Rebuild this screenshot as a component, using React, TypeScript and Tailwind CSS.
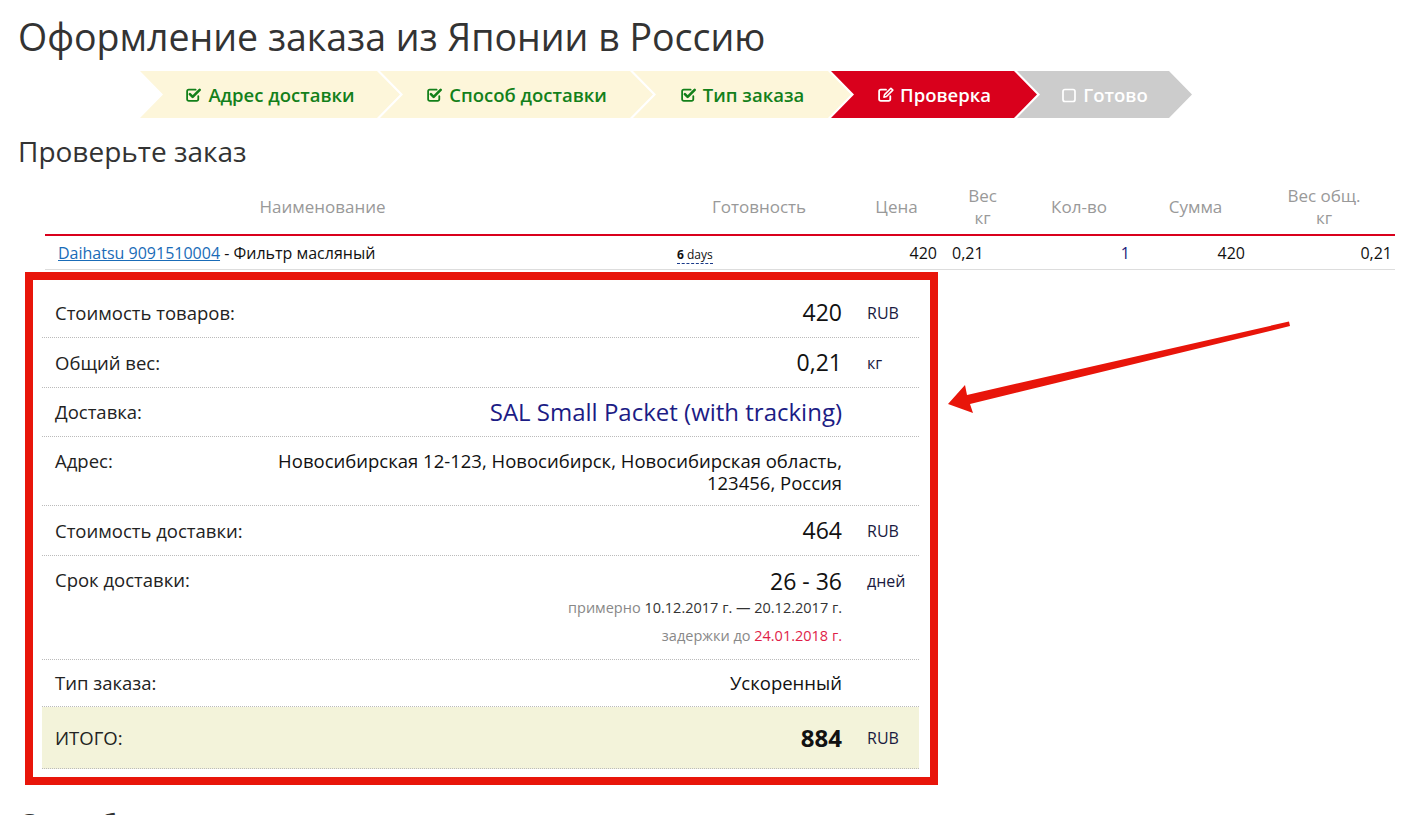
import React from "react";

const CheckSquare = ({ className = "" }: { className?: string }) => (
  <svg viewBox="0 0 16 16" className={className} fill="none" stroke="currentColor" strokeLinecap="round" strokeLinejoin="round">
    <path d="M12.5 9.5v3a1.5 1.5 0 0 1-1.5 1.5H3.5A1.5 1.5 0 0 1 2 12.5V5a1.5 1.5 0 0 1 1.5-1.5h6.5" strokeWidth={1.7} />
    <path d="M4.6 7.6l2.6 2.6 6.6-6.6" strokeWidth={2.5} />
  </svg>
);

const EditSquare = ({ className = "" }: { className?: string }) => (
  <svg viewBox="0 0 16 16" className={className} fill="none" stroke="currentColor" strokeLinecap="round" strokeLinejoin="round">
    <path d="M12.5 9.5v3a1.5 1.5 0 0 1-1.5 1.5H3.5A1.5 1.5 0 0 1 2 12.5V5a1.5 1.5 0 0 1 1.5-1.5h5" strokeWidth={1.7} />
    <path d="M6.5 10.5l0.6-2.4 6-6 1.8 1.8-6 6z" strokeWidth={1.5} />
  </svg>
);

const EmptySquare = ({ className = "" }: { className?: string }) => (
  <svg viewBox="0 0 16 16" className={className} fill="none" stroke="currentColor">
    <rect x="2" y="2.5" width="12" height="12" rx="2" strokeWidth={1.7} />
  </svg>
);

const chevron =
  "[clip-path:polygon(0_0,calc(100%_-_23px)_0,100%_50%,calc(100%_-_23px)_100%,0_100%,23px_50%)]";

const steps = [
  { label: "Адрес доставки", w: "w-[260px]", state: "done" },
  { label: "Способ доставки", w: "w-[273px]", state: "done" },
  { label: "Тип заказа", w: "w-[218px]", state: "done" },
  { label: "Проверка", w: "w-[206px]", state: "active" },
  { label: "Готово", w: "w-[175px]", state: "todo" },
];

const summary = [
  { label: "Стоимость товаров:", value: "420", unit: "RUB", h: "h-[50px]" },
  { label: "Общий вес:", value: "0,21", unit: "кг", h: "h-[50px]" },
];

export default function App() {
  return (
    <div className="relative w-full h-[815px] overflow-hidden bg-white font-['Open_Sans',sans-serif] text-[#222]">
      <div className="pl-[18px]">
        <h1 className="pt-[14px] text-[37.5px] leading-[46px] text-[#333] font-normal">
          Оформление заказа из Японии в Россию
        </h1>

        <div className="mt-[11px] ml-[122px] flex h-[47px]">
          {steps.map((s, i) => (
            <div
              key={s.label}
              className={`${s.w} ${chevron} ${i > 0 ? "-ml-[20px]" : ""} flex items-center justify-center gap-[6px] text-[18.5px] font-semibold ${
                s.state === "done"
                  ? "bg-[#fdf6da] text-[#13801a]"
                  : s.state === "active"
                  ? "bg-[#d9001c] text-white"
                  : "bg-[#cccccc] text-white"
              }`}
            >
              {s.state === "done" && <CheckSquare className="w-[17px] h-[17px]" />}
              {s.state === "active" && <EditSquare className="w-[17px] h-[17px]" />}
              {s.state === "todo" && <EmptySquare className="w-[16px] h-[16px]" />}
              <span>{s.label}</span>
            </div>
          ))}
        </div>

        <h2 className="mt-[15px] text-[28px] leading-[36px] text-[#333] font-normal">Проверьте заказ</h2>
      </div>

      {/* order items */}
      <div className="mt-[14px] ml-[45px] w-[1350px]">
        <div className="grid grid-cols-[625px_178px_97px_75px_118px_115px_142px] h-[53px] pb-[4px] border-b-2 border-[#d9001c] text-[17px] leading-[22px] text-[#999] text-center items-center">
          <div className="pr-[70px]">Наименование</div>
          <div>Готовность</div>
          <div>Цена</div>
          <div>Вес<br />кг</div>
          <div>Кол-во</div>
          <div>Сумма</div>
          <div>Вес общ.<br />кг</div>
        </div>
        <div className="grid grid-cols-[625px_178px_97px_75px_118px_115px_142px] h-[34px] border-b border-[#ddd] text-[16px] items-center text-[#111]">
          <div className="pl-[13px]">
            <a href="#" className="text-[#1a6cb8] underline">Daihatsu 9091510004</a> - Фильтр масляный
          </div>
          <div className="pl-[7px]">
            <span className="text-[12px] border-b border-dashed border-[#1a3a8a] leading-[14px]">
              <b>6</b> days
            </span>
          </div>
          <div className="text-right pr-[8px]">420</div>
          <div className="pl-[7px]">0,21</div>
          <div className="text-right pr-[8px] text-[#1c1c7a]">1</div>
          <div className="text-right pr-[8px]">420</div>
          <div className="text-right pr-[3px]">0,21</div>
        </div>
      </div>

      {/* summary */}
      <div className="mt-[2px] ml-[25px] w-[913px] border-8 border-[#e8150a] pt-[8px] pb-[8px] pl-[9px] pr-[11px]">
        {summary.map((r) => (
          <div key={r.label} className={`grid grid-cols-[214px_597px_66px] ${r.h} items-center border-b border-dotted border-[#bbb]`}>
            <div className="pl-[13px] text-[18.5px]">{r.label}</div>
            <div className="pr-[11px] text-right text-[23px] text-[#111]">{r.value}</div>
            <div className="pl-[14px] text-[16px] text-[#1a1a40]">{r.unit}</div>
          </div>
        ))}
        <div className="grid grid-cols-[214px_597px_66px] h-[49px] items-center border-b border-dotted border-[#bbb]">
          <div className="pl-[13px] text-[18.5px]">Доставка:</div>
          <div className="pr-[11px] text-right text-[24px] text-[#1c1c85]">SAL Small Packet (with tracking)</div>
          <div />
        </div>
        <div className="grid grid-cols-[214px_597px_66px] h-[69px] items-start pt-[13px] border-b border-dotted border-[#bbb] text-[18.5px] leading-[22px]">
          <div className="pl-[13px]">Адрес:</div>
          <div className="pr-[11px] text-right text-[#111]">
            Новосибирская 12-123, Новосибирск, Новосибирская область,
            <br />
            123456, Россия
          </div>
          <div />
        </div>
        <div className="grid grid-cols-[214px_597px_66px] h-[50px] items-center border-b border-dotted border-[#bbb]">
          <div className="pl-[13px] text-[18.5px]">Стоимость доставки:</div>
          <div className="pr-[11px] text-right text-[23px] text-[#111]">464</div>
          <div className="pl-[14px] text-[16px] text-[#1a1a40]">RUB</div>
        </div>
        <div className="grid grid-cols-[214px_597px_66px] h-[104px] items-start border-b border-dotted border-[#bbb]">
          <div className="pl-[13px] pt-[13px] text-[18.5px] leading-[22px]">Срок доставки:</div>
          <div className="pr-[11px] pt-[11px] text-right">
            <div className="text-[23px] leading-[28px] text-[#111]">26 - 36</div>
            <div className="mt-[3px] text-[14.5px] leading-[20px] text-[#333]">
              <span className="text-[#888]">примерно</span> 10.12.2017 г. — 20.12.2017 г.
            </div>
            <div className="mt-[8px] text-[14.5px] leading-[20px] text-[#e01e48]">
              <span className="text-[#888]">задержки до</span> 24.01.2018 г.
            </div>
          </div>
          <div className="pl-[14px] pt-[15px] text-[16px] leading-[20px] text-[#1a1a40]">дней</div>
        </div>
        <div className="grid grid-cols-[214px_597px_66px] h-[47px] items-center border-b border-dotted border-[#bbb]">
          <div className="pl-[13px] text-[18.5px]">Тип заказа:</div>
          <div className="pr-[11px] text-right text-[18.5px] text-[#111]">Ускоренный</div>
          <div />
        </div>
        <div className="grid grid-cols-[214px_597px_66px] h-[62px] items-center border-b border-dotted border-[#bbb] bg-[#f3f3da]">
          <div className="pl-[13px] text-[18.5px]">ИТОГО:</div>
          <div className="pr-[11px] text-right text-[24px] font-bold text-[#111]">884</div>
          <div className="pl-[14px] text-[16px] text-[#1a1a40]">RUB</div>
        </div>
      </div>

      <h2 className="pl-[18px] mt-[20px] text-[28px] leading-[36px] text-[#333]">Способ оплаты</h2>

      {/* annotation arrow */}
      <svg className="absolute left-[940px] top-[315px] w-[360px] h-[105px] pointer-events-none" viewBox="940 315 360 105">
        <polygon
          points="1289,321.5 1290,326 970,404 973,413 948,404 965,385 967,395"
          fill="#e8150a"
        />
      </svg>
    </div>
  );
}
